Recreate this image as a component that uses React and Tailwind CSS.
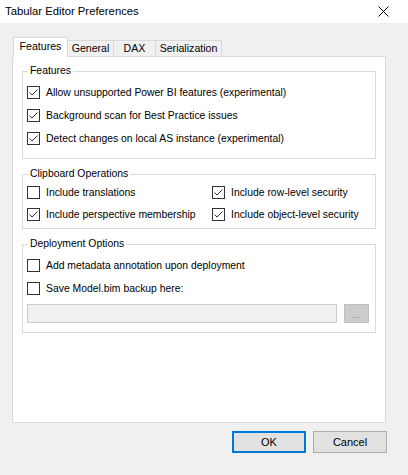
import { useState } from "react";

const font = { fontFamily: '"Liberation Sans", Arial, sans-serif' };

function CheckBox({ label, checked }) {
  return (
    <label className="flex items-center gap-[6px] cursor-default select-none">
      <span className="w-[13px] h-[13px] border border-[#333333] bg-white flex items-center justify-center shrink-0">
        {checked && (
          <svg width="11" height="11" viewBox="0 0 11 11">
            <polyline points="1.5,5.5 4,8 9.5,2.5" fill="none" stroke="#333333" strokeWidth="1" />
          </svg>
        )}
      </span>
      <span className="text-[10.4px] text-black whitespace-nowrap">{label}</span>
    </label>
  );
}

function Group({ title, className, children }) {
  return (
    <fieldset className={"border border-[#dcdcdc] px-[4px] " + (className || "")}>
      <legend className="ml-[1px] px-[2px] text-[10.4px] leading-[14px] text-black">{title}</legend>
      {children}
    </fieldset>
  );
}

const tabs = [
  { name: "Features", w: "w-[55px]" },
  { name: "General", w: "w-[47px]" },
  { name: "DAX", w: "w-[43px]" },
  { name: "Serialization", w: "w-[67px]" },
];

export default function App() {
  const [active] = useState("Features");

  return (
    <div className="w-[408px] h-[475px] bg-[#f0f0f0] flex flex-col overflow-hidden" style={font}>
      <div className="h-[23px] bg-white flex items-center justify-between pl-[5px] pr-[19px] shrink-0">
        <span className="text-[11.3px] text-black">Tabular Editor Preferences</span>
        <svg width="11" height="11" viewBox="0 0 11 11">
          <line x1="0.5" y1="0.5" x2="10.5" y2="10.5" stroke="#000" strokeWidth="1" />
          <line x1="10.5" y1="0.5" x2="0.5" y2="10.5" stroke="#000" strokeWidth="1" />
        </svg>
      </div>

      <div className="pt-[14px] pl-[12px] pr-[22px] flex flex-col">
        <div className="flex items-end pl-[1px] h-[19px]">
          {tabs.map((t) =>
            t.name === active ? (
              <div
                key={t.name}
                className={
                  t.w +
                  " h-[20px] -mb-px relative z-10 bg-white border-l border-t border-r border-[#d9d9d9] flex items-center justify-center text-[10.6px] text-black pb-[2px]"
                }
              >
                {t.name}
              </div>
            ) : (
              <div
                key={t.name}
                className={
                  t.w +
                  " h-[16px] -ml-px bg-[#f0f0f0] border-l border-t border-r border-[#d9d9d9] flex items-center justify-center text-[10.6px] text-black"
                }
              >
                {t.name}
              </div>
            )
          )}
        </div>

        <div className="h-[367px] bg-white border border-[#d9d9d9] px-[9px] pt-[7px] flex flex-col">
          <Group title="Features" className="pb-[8px]">
            <div className="pt-[3px] flex flex-col">
              <div className="h-[23px] flex items-center">
                <CheckBox label="Allow unsupported Power BI features (experimental)" checked />
              </div>
              <div className="h-[23px] flex items-center">
                <CheckBox label="Background scan for Best Practice issues" checked />
              </div>
              <div className="h-[23px] flex items-center">
                <CheckBox label="Detect changes on local AS instance (experimental)" checked />
              </div>
            </div>
          </Group>

          <Group title="Clipboard Operations" className="mt-[8px] pb-[2px]">
            <div className="pt-[1px] grid grid-cols-[185px_1fr]">
              <div className="h-[22px] flex items-center">
                <CheckBox label="Include translations" />
              </div>
              <div className="h-[22px] flex items-center">
                <CheckBox label="Include row-level security" checked />
              </div>
              <div className="h-[22px] flex items-center">
                <CheckBox label="Include perspective membership" checked />
              </div>
              <div className="h-[22px] flex items-center">
                <CheckBox label="Include object-level security" checked />
              </div>
            </div>
          </Group>

          <Group title="Deployment Options" className="mt-[8px] pb-[9px]">
            <div className="pt-[3px] flex flex-col">
              <div className="h-[23px] flex items-center">
                <CheckBox label="Add metadata annotation upon deployment" />
              </div>
              <div className="h-[23px] flex items-center">
                <CheckBox label="Save Model.bim backup here:" />
              </div>
              <div className="mt-[4px] mr-[2px] flex gap-[7px]">
                <div className="flex-1 h-[19px] bg-[#f0f0f0] border border-[#cccccc]" />
                <div className="w-[25px] h-[19px] bg-[#cccccc] border border-[#bfbfbf] flex items-end justify-center text-[9px] leading-[14px] text-[#838383]">
                  ...
                </div>
              </div>
            </div>
          </Group>
        </div>
      </div>

      <div className="mt-[8px] pr-[21px] flex justify-end gap-[7px]">
        <button className="w-[74px] h-[22px] bg-[#e1e1e1] border-2 border-[#0078d7] text-[11px] text-black">
          OK
        </button>
        <button className="w-[74px] h-[22px] bg-[#e1e1e1] border border-[#adadad] text-[11px] text-black">
          Cancel
        </button>
      </div>
    </div>
  );
}
